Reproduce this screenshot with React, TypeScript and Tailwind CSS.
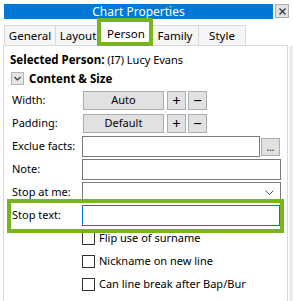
import React from 'react';

const font = { fontFamily: '"Noto Sans", "Open Sans", sans-serif' };

const Tab: React.FC<{ label: string; w: string }> = ({ label, w }) => (
  <div className={`${w} h-[21px] border border-b-0 border-[#d9d9d9] bg-[#f5f5f5] -ml-px first:ml-0 flex items-center justify-center text-[11.5px] text-black`}>
    {label}
  </div>
);

const Btn: React.FC<{ children: React.ReactNode; className?: string }> = ({ children, className = '' }) => (
  <div className={`h-[19px] bg-[#e1e1e1] border border-[#adadad] flex items-center justify-center text-[11px] text-black ${className}`}>
    {children}
  </div>
);

const Row: React.FC<{ label: string; children: React.ReactNode }> = ({ label, children }) => (
  <div className="h-[23px] flex items-center">
    <div className="w-[78px] pl-[8px] text-[11px] text-black whitespace-nowrap">{label}</div>
    {children}
  </div>
);

const Check: React.FC<{ label: string }> = ({ label }) => (
  <div className="h-[23px] flex items-center pl-[78px]">
    <div className="w-[13px] h-[13px] border border-[#333] bg-white" />
    <span className="ml-[4px] text-[11px] text-black whitespace-nowrap">{label}</span>
  </div>
);

export default function App() {
  return (
    <div className="relative w-[293px] h-[301px] overflow-hidden bg-white" style={font}>
      {/* title */}
      <div className="flex pt-[4px] pl-[4px]">
        <div className="w-[269px] h-[15px] bg-[#0078d7] flex items-center justify-center text-white text-[12px] leading-none">
          Chart Properties
        </div>
        <div className="ml-[2px] w-[14px] h-[14px] bg-[#e1e1e1] border border-[#adadad] flex items-center justify-center">
          <svg width="7" height="7" viewBox="0 0 7 7">
            <path d="M0.5 0.5 L6.5 6.5 M6.5 0.5 L0.5 6.5" stroke="#333" strokeWidth="1.3" />
          </svg>
        </div>
      </div>

      {/* tabs */}
      <div className="flex items-end pl-[4px] mt-[2px] h-[25px]">
        <Tab label="General" w="w-[52px]" />
        <Tab label="Layout" w="w-[46px]" />
        <div className="w-[52px] h-[25px] -ml-px border border-b-0 border-[#d9d9d9] bg-white flex items-center justify-center text-[11.5px] text-black relative z-10">
          Person
        </div>
        <Tab label="Family" w="w-[48px]" />
        <Tab label="Style" w="w-[48px]" />
      </div>

      {/* panel */}
      <div className="flex">
        <div className="ml-[3px] w-[286px] h-[260px] border border-b-0 border-[#d9d9d9] -mt-px bg-white">
          <div className="mt-[6px] h-[16px] flex items-center pl-[6px] text-[11px] text-black whitespace-nowrap">
            <span className="font-bold text-[11.5px]">Selected Person:</span>
            <span className="ml-[3px]">(I7) Lucy Evans</span>
          </div>
          <div className="h-[21px] flex items-center pl-[7px]">
            <div className="w-[13px] h-[13px] bg-[#e5e5e5] border border-[#b5b5b5] flex items-center justify-center">
              <svg width="7" height="5" viewBox="0 0 7 5">
                <path d="M0.5 1 L3.5 4 L6.5 1" stroke="#333" strokeWidth="1.1" fill="none" />
              </svg>
            </div>
            <span className="ml-[5px] text-[11.5px] font-bold text-black">Content &amp; Size</span>
          </div>

          <Row label="Width:">
            <Btn className="ml-[1px] w-[81px]">Auto</Btn>
            <Btn className="ml-[3px] w-[19px] text-[15px]">+</Btn>
            <Btn className="ml-[2px] w-[19px] text-[15px]">−</Btn>
          </Row>
          <Row label="Padding:">
            <Btn className="ml-[1px] w-[81px]">Default</Btn>
            <Btn className="ml-[3px] w-[19px] text-[15px]">+</Btn>
            <Btn className="ml-[2px] w-[19px] text-[15px]">−</Btn>
          </Row>
          <Row label="Exclue facts:">
            <div className="w-[178px] h-[21px] border border-[#7a7a7a] bg-white" />
            <div className="ml-[1px] w-[19px] h-[18px] bg-[#e1e1e1] border border-[#adadad] flex items-end justify-center pb-[3px]">
              <span className="text-[10px] leading-none text-black">...</span>
            </div>
          </Row>
          <Row label="Note:">
            <div className="w-[199px] h-[21px] border border-[#7a7a7a] bg-white" />
          </Row>
          <Row label="Stop at me:">
            <div className="w-[199px] h-[21px] border border-[#7a7a7a] bg-white flex items-center justify-end pr-[6px]">
              <svg width="9" height="5" viewBox="0 0 9 5">
                <path d="M0.5 0.5 L4.5 4.5 L8.5 0.5" stroke="#555" strokeWidth="1" fill="none" />
              </svg>
            </div>
          </Row>
          <Row label="Stop text:">
            <div className="w-[198px] h-[21px] border border-[#0078d7] bg-white" />
          </Row>

          <Check label="Flip use of surname" />
          <Check label="Nickname on new line" />
          <Check label="Can line break after Bap/Bur" />
        </div>
        <div className="ml-px w-[4px] h-[260px] bg-[#ebebeb]" />
      </div>

      {/* highlight boxes */}
      <div className="absolute left-[97px] top-[18px] w-[56px] h-[28px] border-4 border-[#78b41e] z-20" />
      <div className="absolute left-[7px] top-[199px] w-[277px] h-[34px] border-4 border-[#78b41e] z-20" />
    </div>
  );
}
